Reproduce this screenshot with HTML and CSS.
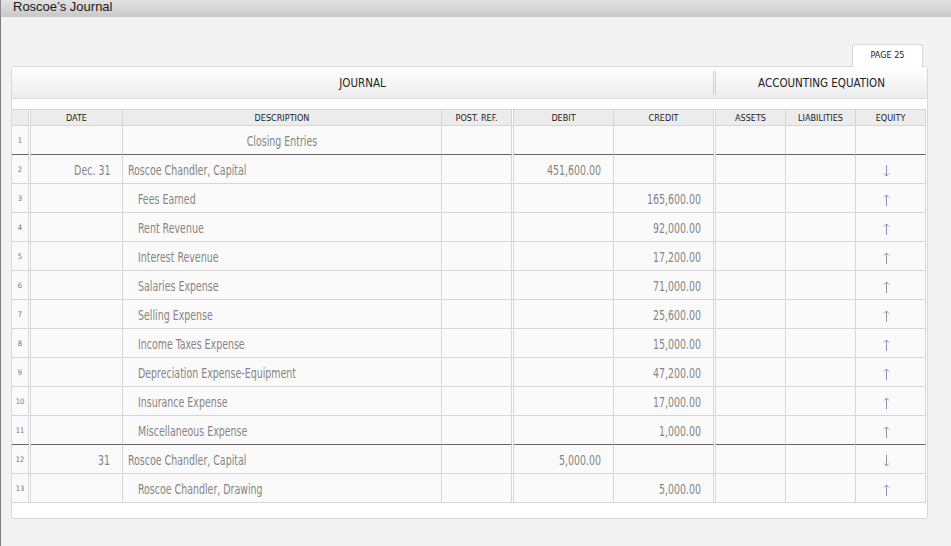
FILE: index.html
```html
<!DOCTYPE html>
<html>
<head>
<meta charset="utf-8">
<link rel="stylesheet" href="styles.css">
</head>
<body>
<div class="titlebar">Roscoe’s Journal</div>
<div class="page">
  <div class="tabs"><div class="tab">PAGE 25</div></div>
  <div class="panel">
    <div class="panel-head">
      <div class="ph-journal">JOURNAL</div>
      <div class="ph-sep"></div>
      <div class="ph-eq">ACCOUNTING EQUATION</div>
    </div>
    <div class="ledger">
      <div class="row head">
        <div class="c num"></div><div class="c gap"></div>
        <div class="c">DATE</div><div class="c">DESCRIPTION</div><div class="c">POST. REF.</div><div class="c gap"></div>
        <div class="c">DEBIT</div><div class="c">CREDIT</div><div class="c gap"></div>
        <div class="c">ASSETS</div><div class="c">LIABILITIES</div><div class="c">EQUITY</div>
      </div>

      <div class="row thick">
        <div class="c num">1</div><div class="c gap"></div>
        <div class="c date"></div><div class="c desc center"><span class="t">Closing Entries</span></div><div class="c"></div><div class="c gap"></div>
        <div class="c amt"></div><div class="c amt"></div><div class="c gap"></div>
        <div class="c"></div><div class="c"></div><div class="c eq"></div>
      </div>

      <div class="row">
        <div class="c num">2</div><div class="c gap"></div>
        <div class="c date"><span class="t">Dec. 31</span></div><div class="c desc"><span class="t">Roscoe Chandler, Capital</span></div><div class="c"></div><div class="c gap"></div>
        <div class="c amt"><span class="t">451,600.00</span></div><div class="c amt"></div><div class="c gap"></div>
        <div class="c"></div><div class="c"></div><div class="c eq"><svg class="arrow" viewBox="0 0 7 12" width="7" height="12"><path d="M3.5 0V11M1 8.5L3.5 11L6 8.5"/></svg></div>
      </div>

      <div class="row">
        <div class="c num">3</div><div class="c gap"></div>
        <div class="c date"></div><div class="c desc indent"><span class="t">Fees Earned</span></div><div class="c"></div><div class="c gap"></div>
        <div class="c amt"></div><div class="c amt"><span class="t">165,600.00</span></div><div class="c gap"></div>
        <div class="c"></div><div class="c"></div><div class="c eq"><svg class="arrow" viewBox="0 0 7 12" width="7" height="12"><path d="M3.5 12V1M1 3.5L3.5 1L6 3.5"/></svg></div>
      </div>

      <div class="row">
        <div class="c num">4</div><div class="c gap"></div>
        <div class="c date"></div><div class="c desc indent"><span class="t">Rent Revenue</span></div><div class="c"></div><div class="c gap"></div>
        <div class="c amt"></div><div class="c amt"><span class="t">92,000.00</span></div><div class="c gap"></div>
        <div class="c"></div><div class="c"></div><div class="c eq"><svg class="arrow" viewBox="0 0 7 12" width="7" height="12"><path d="M3.5 12V1M1 3.5L3.5 1L6 3.5"/></svg></div>
      </div>

      <div class="row">
        <div class="c num">5</div><div class="c gap"></div>
        <div class="c date"></div><div class="c desc indent"><span class="t">Interest Revenue</span></div><div class="c"></div><div class="c gap"></div>
        <div class="c amt"></div><div class="c amt"><span class="t">17,200.00</span></div><div class="c gap"></div>
        <div class="c"></div><div class="c"></div><div class="c eq"><svg class="arrow" viewBox="0 0 7 12" width="7" height="12"><path d="M3.5 12V1M1 3.5L3.5 1L6 3.5"/></svg></div>
      </div>

      <div class="row">
        <div class="c num">6</div><div class="c gap"></div>
        <div class="c date"></div><div class="c desc indent"><span class="t">Salaries Expense</span></div><div class="c"></div><div class="c gap"></div>
        <div class="c amt"></div><div class="c amt"><span class="t">71,000.00</span></div><div class="c gap"></div>
        <div class="c"></div><div class="c"></div><div class="c eq"><svg class="arrow" viewBox="0 0 7 12" width="7" height="12"><path d="M3.5 12V1M1 3.5L3.5 1L6 3.5"/></svg></div>
      </div>

      <div class="row">
        <div class="c num">7</div><div class="c gap"></div>
        <div class="c date"></div><div class="c desc indent"><span class="t">Selling Expense</span></div><div class="c"></div><div class="c gap"></div>
        <div class="c amt"></div><div class="c amt"><span class="t">25,600.00</span></div><div class="c gap"></div>
        <div class="c"></div><div class="c"></div><div class="c eq"><svg class="arrow" viewBox="0 0 7 12" width="7" height="12"><path d="M3.5 12V1M1 3.5L3.5 1L6 3.5"/></svg></div>
      </div>

      <div class="row">
        <div class="c num">8</div><div class="c gap"></div>
        <div class="c date"></div><div class="c desc indent"><span class="t">Income Taxes Expense</span></div><div class="c"></div><div class="c gap"></div>
        <div class="c amt"></div><div class="c amt"><span class="t">15,000.00</span></div><div class="c gap"></div>
        <div class="c"></div><div class="c"></div><div class="c eq"><svg class="arrow" viewBox="0 0 7 12" width="7" height="12"><path d="M3.5 12V1M1 3.5L3.5 1L6 3.5"/></svg></div>
      </div>

      <div class="row">
        <div class="c num">9</div><div class="c gap"></div>
        <div class="c date"></div><div class="c desc indent"><span class="t">Depreciation Expense-Equipment</span></div><div class="c"></div><div class="c gap"></div>
        <div class="c amt"></div><div class="c amt"><span class="t">47,200.00</span></div><div class="c gap"></div>
        <div class="c"></div><div class="c"></div><div class="c eq"><svg class="arrow" viewBox="0 0 7 12" width="7" height="12"><path d="M3.5 12V1M1 3.5L3.5 1L6 3.5"/></svg></div>
      </div>

      <div class="row">
        <div class="c num">10</div><div class="c gap"></div>
        <div class="c date"></div><div class="c desc indent"><span class="t">Insurance Expense</span></div><div class="c"></div><div class="c gap"></div>
        <div class="c amt"></div><div class="c amt"><span class="t">17,000.00</span></div><div class="c gap"></div>
        <div class="c"></div><div class="c"></div><div class="c eq"><svg class="arrow" viewBox="0 0 7 12" width="7" height="12"><path d="M3.5 12V1M1 3.5L3.5 1L6 3.5"/></svg></div>
      </div>

      <div class="row thick">
        <div class="c num">11</div><div class="c gap"></div>
        <div class="c date"></div><div class="c desc indent"><span class="t">Miscellaneous Expense</span></div><div class="c"></div><div class="c gap"></div>
        <div class="c amt"></div><div class="c amt"><span class="t">1,000.00</span></div><div class="c gap"></div>
        <div class="c"></div><div class="c"></div><div class="c eq"><svg class="arrow" viewBox="0 0 7 12" width="7" height="12"><path d="M3.5 12V1M1 3.5L3.5 1L6 3.5"/></svg></div>
      </div>

      <div class="row">
        <div class="c num">12</div><div class="c gap"></div>
        <div class="c date"><span class="t">31</span></div><div class="c desc"><span class="t">Roscoe Chandler, Capital</span></div><div class="c"></div><div class="c gap"></div>
        <div class="c amt"><span class="t">5,000.00</span></div><div class="c amt"></div><div class="c gap"></div>
        <div class="c"></div><div class="c"></div><div class="c eq"><svg class="arrow" viewBox="0 0 7 12" width="7" height="12"><path d="M3.5 0V11M1 8.5L3.5 11L6 8.5"/></svg></div>
      </div>

      <div class="row">
        <div class="c num">13</div><div class="c gap"></div>
        <div class="c date"></div><div class="c desc indent"><span class="t">Roscoe Chandler, Drawing</span></div><div class="c"></div><div class="c gap"></div>
        <div class="c amt"></div><div class="c amt"><span class="t">5,000.00</span></div><div class="c gap"></div>
        <div class="c"></div><div class="c"></div><div class="c eq"><svg class="arrow" viewBox="0 0 7 12" width="7" height="12"><path d="M3.5 12V1M1 3.5L3.5 1L6 3.5"/></svg></div>
      </div>
    </div>
  </div>
</div>
</body>
</html>
```
FILE: styles.css
```css
html, body {
  margin: 0;
  padding: 0;
  background: #f2f3f2;
}
body {
  font-family: "Liberation Sans", Arial, sans-serif;
  height: 546px;
  overflow: hidden;
}
.titlebar {
  height: 17px;
  box-sizing: border-box;
  padding-left: 12px;
  font-size: 13px;
  line-height: 13px;
  color: #1a1a1a;
  background: linear-gradient(#e2e2e2, #c9c9c9);
  border-left: 1px solid #8a8a8a;
}
.page {
  border-left: 1px solid #7c7c7c;
  height: 529px;
  box-sizing: border-box;
  padding: 27px 0 0 10px;
}
.tabs {
  width: 917px;
  display: flex;
  justify-content: flex-end;
}
.tab {
  position: relative;
  z-index: 1;
  width: 71px;
  height: 23px;
  box-sizing: border-box;
  margin-right: 5px;
  margin-bottom: -1px;
  background: #fff;
  border: 1px solid #d6d6d6;
  border-bottom: none;
  border-radius: 3px 3px 0 0;
  font-family: "DejaVu Sans Condensed", "DejaVu Sans", sans-serif;
  font-size: 9px;
  color: #222;
  text-align: center;
  line-height: 21px;
}
.panel {
  width: 917px;
  box-sizing: border-box;
  background: #fff;
  border: 1px solid #d8d8d8;
  border-radius: 3px;
  padding-bottom: 15px;
}
.panel-head {
  height: 32px;
  box-sizing: border-box;
  border-bottom: 1px solid #dcdcdc;
  background: linear-gradient(#ffffff, #ececec);
  display: flex;
  align-items: center;
  font-family: "DejaVu Sans Condensed", "DejaVu Sans", sans-serif;
  font-size: 11.5px;
  color: #222;
  margin-bottom: 10px;
}
.ph-journal {
  width: 701px;
  text-align: center;
}
.ph-sep {
  width: 1px;
  height: 24px;
  border-left: 1px solid #d0d0d0;
  border-right: 1px solid #d0d0d0;
}
.ph-eq {
  flex: 1;
  text-align: center;
}
.ledger {
  border-top: 1px solid #d6d6d6;
  width: 914px;
}
.row {
  display: grid;
  grid-template-columns: 17px 2px 92px 319px 70px 2px 100px 100px 2px 70px 70px 70px;
  height: 29px;
}
.c {
  box-sizing: border-box;
  border-right: 1px solid #d6d6d6;
  border-bottom: 1px solid #d6d6d6;
  background: #fafafa;
  font-family: "DejaVu Sans Condensed", "DejaVu Sans", sans-serif;
  font-size: 14px;
  color: #878583;
  display: flex;
  align-items: center;
  white-space: nowrap;
  overflow: hidden;
}
.t {
  display: inline-block;
  transform: scaleX(0.75);
  transform-origin: left center;
  margin-top: 1px;
}
.c.gap {
  background: #fff;
}
.row.thick .c {
  border-bottom-color: #666;
}
.row.thick .c.gap {
  border-bottom-color: #d6d6d6;
}
.row.head {
  height: 16px;
}
.row.head .c {
  background: #ececec;
  justify-content: center;
  font-size: 9px;
  color: #222;
}
.row.head .c.gap {
  background: #fff;
}
.c.num {
  justify-content: center;
  font-size: 7.5px;
  color: #777;
}
.c.date, .c.amt {
  justify-content: flex-end;
  padding-right: 12px;
}
.c.date .t, .c.amt .t {
  transform-origin: right center;
}
.c.desc {
  padding-left: 5px;
}
.c.desc.indent {
  padding-left: 15px;
}
.c.desc.center {
  justify-content: center;
  padding-left: 0;
}
.c.desc.center .t {
  transform-origin: center center;
}
.c.eq {
  justify-content: center;
  padding-right: 8px;
}
.arrow {
  margin-top: 4px;
  fill: none;
  stroke: #8595b3;
  stroke-width: 1;
}
```
